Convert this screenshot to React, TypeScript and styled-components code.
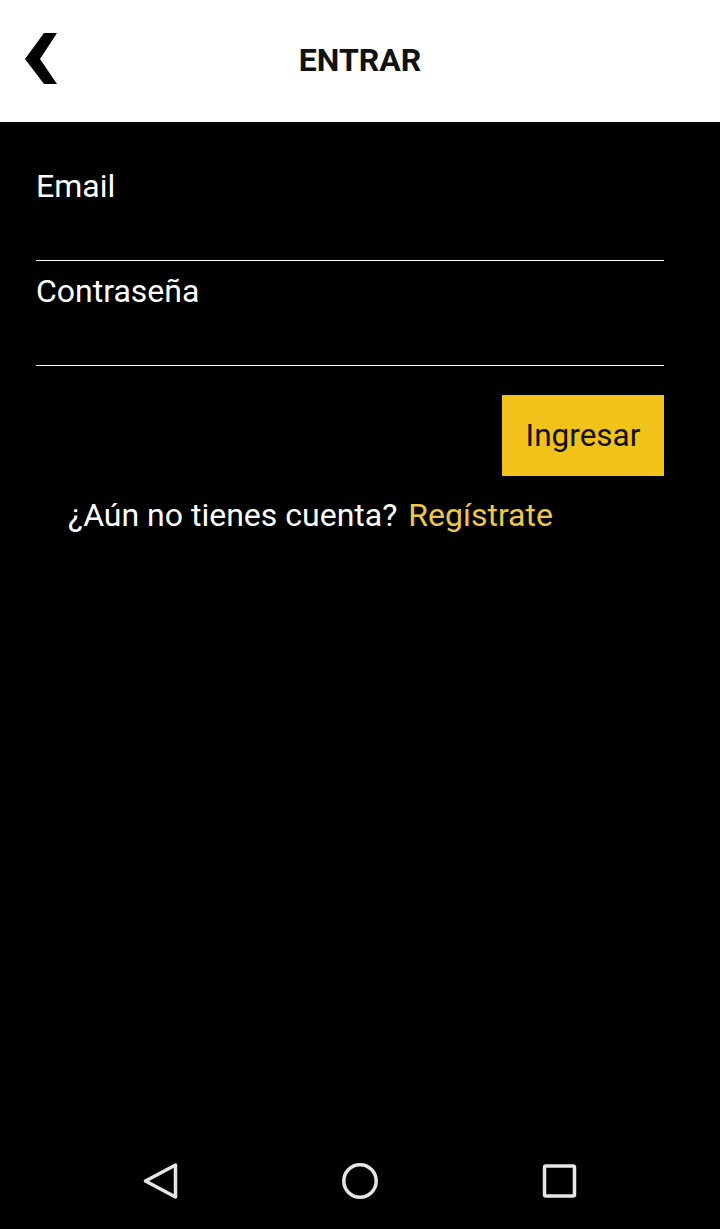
import React from "react";
import styled, { createGlobalStyle } from "styled-components";

const Global = createGlobalStyle`
  html, body { margin: 0; padding: 0; background: #000; }
  body { font-family: Roboto, "Noto Sans", sans-serif; }
  * { box-sizing: border-box; }
`;

const Screen = styled.div`
  width: 720px;
  height: 1229px;
  display: flex;
  flex-direction: column;
  background: #000;
  overflow: hidden;
`;

const Header = styled.header`
  height: 122px;
  flex: none;
  background: #fff;
  display: grid;
  grid-template-columns: 100px 1fr 100px;
  align-items: center;
`;

const BackButton = styled.button`
  border: 0;
  background: none;
  padding: 0 0 4px 25px;
  margin: 0;
  height: 100%;
  display: flex;
  align-items: center;
  cursor: pointer;
`;

const Title = styled.h1`
  margin: 0 0 3px;
  text-align: center;
  font-family: Roboto, sans-serif;
  font-weight: 700;
  font-size: 32px;
  color: #111;
`;

const Content = styled.main`
  flex: 1;
  padding: 34px 56px 0 36px;
  display: flex;
  flex-direction: column;
`;

const Field = styled.label`
  display: flex;
  flex-direction: column;
  padding-top: 11px;
`;

const Label = styled.span`
  font-size: 32px;
  line-height: 38px;
  color: #fff;
`;

const Input = styled.input`
  height: 56px;
  border: 0;
  border-bottom: 1px solid #fff;
  background: transparent;
  color: #fff;
  font-family: Roboto, sans-serif;
  font-size: 30px;
  outline: none;
  padding: 0;
`;

const Actions = styled.div`
  display: flex;
  justify-content: flex-end;
  margin-top: 29px;
`;

const SubmitButton = styled.button`
  width: 162px;
  height: 81px;
  border: 0;
  background: #f1c31a;
  color: #111;
  font-family: Roboto, sans-serif;
  font-size: 31.5px;
  cursor: pointer;
`;

const RegisterLine = styled.p`
  margin: 20px 0 0 32px;
  font-size: 32px;
  line-height: 38px;
  color: #fff;
`;

const Link = styled.a`
  color: #eec64a;
  text-decoration: none;
  margin-left: 11px;
`;

const NavBar = styled.nav`
  height: 96px;
  flex: none;
  display: flex;
  align-items: center;
  justify-content: space-between;
  padding: 0 143px;
  background: #000;
`;

const NavIcon = styled.svg`
  width: 36px;
  height: 36px;
  display: block;
`;

export default function App() {
  return (
    <>
      <Global />
      <Screen>
        <Header>
          <BackButton aria-label="Volver">
            <svg width="33" height="52" viewBox="0 0 33 52">
              <polygon points="19,0 32,0 15,26 32,51 19,51 0,26" fill="#000" />
            </svg>
          </BackButton>
          <Title>ENTRAR</Title>
          <div />
        </Header>
        <Content>
          <Field>
            <Label>Email</Label>
            <Input type="email" />
          </Field>
          <Field>
            <Label>Contraseña</Label>
            <Input type="password" />
          </Field>
          <Actions>
            <SubmitButton>Ingresar</SubmitButton>
          </Actions>
          <RegisterLine>
            ¿Aún no tienes cuenta?<Link href="#">Regístrate</Link>
          </RegisterLine>
        </Content>
        <NavBar>
          <NavIcon viewBox="0 0 36 36">
            <path d="M32.5 2 L2.5 18 L32.5 34 Z" fill="none" stroke="#e6e6e6" strokeWidth="3.5" strokeLinejoin="round" />
          </NavIcon>
          <NavIcon viewBox="0 0 36 36">
            <circle cx="18" cy="18" r="16.2" fill="none" stroke="#e6e6e6" strokeWidth="3.5" />
          </NavIcon>
          <NavIcon viewBox="0 0 36 36">
            <rect x="3.5" y="3" width="30" height="30" rx="1.5" fill="none" stroke="#e6e6e6" strokeWidth="3.5" />
          </NavIcon>
        </NavBar>
      </Screen>
    </>
  );
}
